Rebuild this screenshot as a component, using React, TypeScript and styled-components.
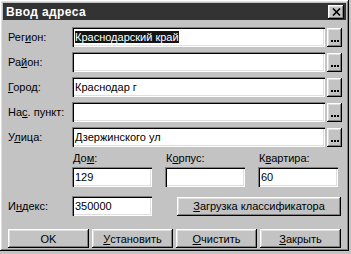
import React from "react";
import styled, { createGlobalStyle, css } from "styled-components";

const Global = createGlobalStyle`
  html, body { margin: 0; padding: 0; background: #c3c3c3; }
  body { font-family: "Liberation Sans", Arial, sans-serif; font-size: 11px; color: #000; }
`;

const raised = css`
  background: #c3c3c3;
  box-shadow: inset -1px -1px 0 #000, inset 1px 1px 0 #fff, inset -2px -2px 0 #808080, inset 2px 2px 0 #dfdfdf;
`;

const sunken = css`
  background: #fff;
  box-shadow: inset 1px 1px 0 #808080, inset 2px 2px 0 #000, inset -1px -1px 0 #fff, inset -2px -2px 0 #dfdfdf;
`;

const Window = styled.div`
  ${raised};
  box-sizing: border-box;
  width: 349px;
  height: 251px;
  padding: 3px;
  display: flex;
  flex-direction: column;
`;

const TitleBar = styled.div`
  height: 17px;
  background: #333;
  display: flex;
  align-items: center;
  justify-content: space-between;
  padding: 0 2px 0 3px;
`;

const Title = styled.span`
  color: #fff;
  font-weight: bold;
  font-size: 12px;
  letter-spacing: 0.4px;
`;

const CloseButton = styled.div`
  ${raised};
  width: 16px;
  height: 14px;
  display: flex;
  align-items: center;
  justify-content: center;
`;

const Body = styled.div`
  padding: 7px 0 0 5px;
  display: flex;
  flex-direction: column;
`;

const FieldRow = styled.div`
  display: flex;
  align-items: center;
  height: 20px;
  margin-bottom: 5px;
`;

const Label = styled.label<{ $width?: number }>`
  width: ${(p) => p.$width ?? 64}px;
  flex: none;
  white-space: nowrap;
`;

const Field = styled.div<{ $width: number }>`
  ${sunken};
  box-sizing: border-box;
  width: ${(p) => p.$width}px;
  height: 20px;
  padding: 3px 3px 0 3px;
  line-height: 14px;
  white-space: nowrap;
  overflow: hidden;
  flex: none;
`;

const Selected = styled.span`
  background: #141414;
  color: #fff;
`;

const EllipsisButton = styled.div`
  ${raised};
  width: 15px;
  height: 19px;
  margin-left: 2px;
  display: flex;
  align-items: flex-end;
  justify-content: center;
  padding-bottom: 5px;
  box-sizing: border-box;
`;

const Dots = styled.svg`
  display: block;
`;

const HouseRow = styled.div`
  display: grid;
  grid-template-columns: repeat(3, 80px);
  column-gap: 13px;
  margin-left: 64px;
`;

const HouseCell = styled.div`
  display: flex;
  flex-direction: column;
`;

const SmallLabel = styled.label`
  height: 13px;
  line-height: 13px;
  margin: 0 0 2px 1px;
`;

const IndexRow = styled.div`
  display: flex;
  align-items: center;
  margin-top: 9px;
`;

const PushButton = styled.div<{ $width: number }>`
  ${raised};
  box-sizing: border-box;
  width: ${(p) => p.$width}px;
  height: 19px;
  display: flex;
  align-items: center;
  justify-content: center;
  white-space: nowrap;
  flex: none;
`;

const WideButton = styled(PushButton)`
  margin-left: 25px;
`;

const ButtonRow = styled.div`
  display: flex;
  gap: 3px;
  margin-top: 13px;
`;

const U = styled.u`
  text-decoration: underline;
  text-underline-offset: 1px;
`;

const rows: { pre: string; acc: string; post: string; value?: React.ReactNode }[] = [
  { pre: "Рег", acc: "и", post: "он:", value: <Selected>Краснодарский край</Selected> },
  { pre: "Ра", acc: "й", post: "он:" },
  { pre: "", acc: "Г", post: "ород:", value: "Краснодар г" },
  { pre: "На", acc: "с", post: ". пункт:" },
  { pre: "У", acc: "л", post: "ица:", value: "Дзержинского ул" },
];

const house = [
  { pre: "До", acc: "м", post: ":", value: "129" },
  { pre: "К", acc: "о", post: "рпус:", value: "" },
  { pre: "К", acc: "в", post: "артира:", value: "60" },
];

const buttons = [
  { acc: "", post: "OK" },
  { acc: "У", post: "становить" },
  { acc: "О", post: "чистить" },
  { acc: "З", post: "акрыть" },
];

export default function App() {
  return (
    <>
      <Global />
      <Window>
        <TitleBar>
          <Title>Ввод адреса</Title>
          <CloseButton>
            <svg width="9" height="8" viewBox="0 0 9 8">
              <path d="M1 0.5 L8 7.5 M8 0.5 L1 7.5" stroke="#000" strokeWidth="1.6" />
            </svg>
          </CloseButton>
        </TitleBar>
        <Body>
          {rows.map((r, i) => (
            <FieldRow key={i}>
              <Label>
                {r.pre}
                <U>{r.acc}</U>
                {r.post}
              </Label>
              <Field $width={253}>{r.value}</Field>
              <EllipsisButton>
                <Dots width="8" height="2" viewBox="0 0 8 2">
                  <rect x="0" y="0" width="2" height="2" fill="#000" />
                  <rect x="3" y="0" width="2" height="2" fill="#000" />
                  <rect x="6" y="0" width="2" height="2" fill="#000" />
                </Dots>
              </EllipsisButton>
            </FieldRow>
          ))}
          <HouseRow>
            {house.map((h, i) => (
              <HouseCell key={i}>
                <SmallLabel>
                  {h.pre}
                  <U>{h.acc}</U>
                  {h.post}
                </SmallLabel>
                <Field $width={80}>{h.value}</Field>
              </HouseCell>
            ))}
          </HouseRow>
          <IndexRow>
            <Label>
              И<U>н</U>декс:
            </Label>
            <Field $width={80}>350000</Field>
            <WideButton $width={164}>
              <U>З</U>агрузка классификатора
            </WideButton>
          </IndexRow>
          <ButtonRow>
            {buttons.map((b, i) => (
              <PushButton key={i} $width={81}>
                {b.acc && <U>{b.acc}</U>}
                {b.post}
              </PushButton>
            ))}
          </ButtonRow>
        </Body>
      </Window>
    </>
  );
}
